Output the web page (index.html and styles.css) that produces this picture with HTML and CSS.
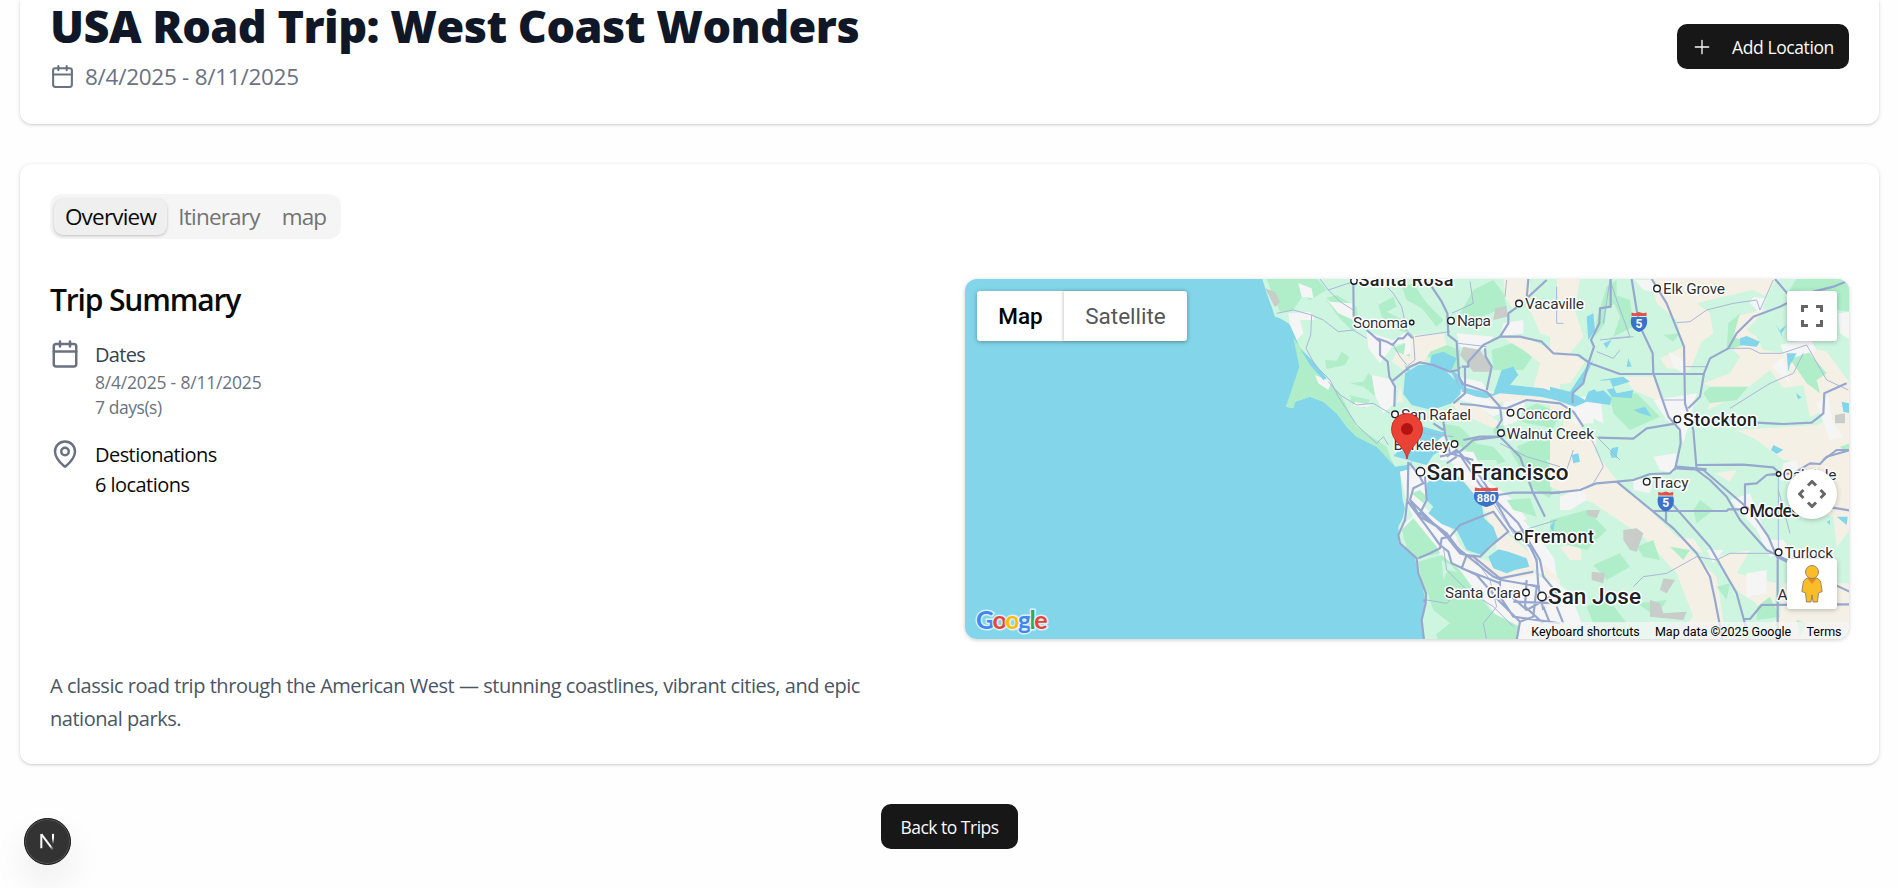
FILE: index.html
```html
<!DOCTYPE html>
<html lang="en">
<head>
<meta charset="utf-8">
<title>USA Road Trip: West Coast Wonders</title>
<link rel="stylesheet" href="styles.css">
</head>
<body>
<main class="page">
  <header class="card trip-header">
    <div>
      <h1 class="trip-title">USA Road Trip: West Coast Wonders</h1>
      <div class="trip-dates">
        <svg class="icon-md" viewBox="0 0 24 24"><path d="M8 2v4M16 2v4M3 10h18"/><rect x="3" y="4" width="18" height="18" rx="2"/></svg>
        <span>8/4/2025 - 8/11/2025</span>
      </div>
    </div>
    <button class="btn btn-add">
      <svg class="icon-sm" viewBox="0 0 24 24"><path d="M4 12h16M12 4v16"/></svg>
      <span>Add Location</span>
    </button>
  </header>

  <section class="card trip-body">
    <nav class="tabs">
      <button class="tab tab-overview active">Overview</button>
      <button class="tab tab-itinerary">Itinerary</button>
      <button class="tab tab-map">map</button>
    </nav>
    <div class="columns">
      <div>
        <h2 class="summary-title">Trip Summary</h2>
        <div class="fact">
          <svg class="icon-lg" viewBox="0 0 24 24"><path d="M8 2v4M16 2v4M3 10h18"/><rect x="3" y="4" width="18" height="18" rx="2"/></svg>
          <div class="fact-text">
            <p class="fact-label muted-label">Dates</p>
            <p class="fact-small">8/4/2025 - 8/11/2025</p>
            <p class="fact-small days">7 days(s)</p>
          </div>
        </div>
        <div class="fact">
          <svg class="icon-lg" viewBox="0 0 24 24"><path d="M20 10c0 5-5.500 10.200-7.400 11.800a1 1 0 0 1-1.200 0C9.500 20.200 4 15 4 10a8 8 0 0 1 16 0"/><circle cx="12" cy="10" r="3"/></svg>
          <div class="fact-text">
            <p class="fact-label destinations">Destionations</p>
            <p class="fact-label locations">6 locations</p>
          </div>
        </div>
      </div>
      <div class="map">
        <svg class="map-canvas" viewBox="965 279 885 360">
          <rect class="water" x="965" y="279" width="885" height="360"/>
          <g transform="translate(1260 270) scale(.333333)">
            <path class="land" d="M5 20 20 70 35 110 45 140 60 145 85 160 105 180 110 210 125 250 120 290 100 350 78 410 100 415 105 395 150 380 190 395 230 430 260 470 290 500 350 530 385 558 405 590 440 585 460 570 440 600 420 605 428 690 435 715 428 745 415 770 416 820 465 865 475 910 495 965 500 1000 485 1050 495 1115H1780V20Z"/>
            <!-- woodland, upper left -->
            <path class="wood" d="M20 25H170L200 60 150 90 130 75 100 120 60 125 40 80Z M100 205 135 250 190 320 240 370 290 470 380 530 400 585 350 530 290 500 260 470 230 430 190 395 150 380 105 395 100 415 78 410 118 290Z M245 245 268 262 255 285 200 297 195 270 230 272Z M325 310 375 350 345 378 310 350 270 340 310 335Z M195 85 230 75 290 110 300 170 280 185 235 140Z M355 105 400 80 410 110 380 125 430 150 445 190 400 175 365 140Z M425 50 460 40 500 100 550 150 530 170 485 115 440 90Z M640 60 700 30 730 70 740 110 690 130 640 150 600 130Z M480 245 560 225 600 240 600 310 570 295 520 270Z M695 240 770 215 830 240 790 300 700 300Z M270 375 330 390 315 415 275 400Z M400 235 435 220 455 270 420 255Z M545 460 600 470 650 520 640 555 570 510Z M750 440 830 400 900 430 880 475 800 460Z"/>
            <!-- towns and farmland, upper left -->
            <path class="town" d="M115 40 155 55 160 85 125 80Z M85 130 150 125 165 150 120 150 130 190 110 210 90 165Z M180 65 210 95 280 100 280 150 235 130Z M320 185 400 210 440 185 455 215 400 225 360 280 325 235Z M165 315 215 335 205 360 175 340Z M335 315 400 330 405 400 370 430 345 375Z M285 395 335 405 320 412 280 408Z M440 200 465 205 460 245 430 260Z M590 190 700 200 670 240 600 230Z M730 160 790 150 790 190 720 200Z M590 320 665 335 700 390 740 420 700 440 640 400 600 390Z M730 390 800 380 780 450 730 470Z M530 480 570 520 620 570H540Z"/>
            <path class="farm" d="M455 195 550 190 560 225 510 245 490 280 430 300 395 275 410 245 450 260Z M730 20H810V80L760 120 735 80Z M730 205 800 205 900 250V370L820 355 840 280 790 240Z M420 345 410 400 430 395Z M650 360 770 370 900 385V410L780 390 700 400Z M570 395 650 405 720 460 700 475 600 430Z M810 120 870 90 900 100V210L840 190Z"/>
            <path class="wood" d="M700 475 730 465 740 500 700 490Z M640 520 700 530 735 570H640Z M840 500 900 505V570H800L770 530Z"/>
            <path class="gray" d="M15 55 45 65 60 95 45 112Z M610 230 660 240 690 285 695 305 640 305 600 255Z M705 115 740 108 742 140 700 150Z"/>
            <path class="water" d="M435 310 475 285 520 283 560 305 600 345 603 370 575 400 545 410 515 420 455 405 430 372Z M515 255 550 245 590 265 575 300 540 300 510 280Z M570 300 590 310 620 350 600 360Z M605 350 700 372 725 300 760 290 775 315 750 345 800 350 850 355 900 372V392L840 380 780 375 720 370 680 385 650 380 605 365Z M120 235 165 280 200 325 190 330 150 285Z M435 285 450 300 440 305Z"/>
          </g>
          <g transform="translate(1260 450) scale(.333333)">
            <path class="town" d="M420 65 500 45 505 100 490 170 560 220 590 260 600 295 650 320 700 350 720 370 820 370 880 400 900 440V580H780L720 510 650 420 560 355 530 300 470 220 440 160Z M560 5 640 5 680 90 760 150 830 250 880 310 890 380 830 370 800 290 700 210 660 150 600 90Z M420 230 470 190 455 240 430 260Z M760 0H850L870 70 840 120 830 80Z"/>
            <path class="wood" d="M425 240 460 205 530 290 540 310 470 325 440 295Z M455 130 480 120 500 140 490 160Z M475 335 545 315 600 360 650 430 700 490 780 530 770 585H540L500 480Z M750 0H900V20L860 30 880 80 870 145 810 110Z M700 10 740 35 720 60Z M740 150 810 145 830 200 760 180Z"/>
            <path class="park" d="M500 420 520 480 570 520 520 560 500 570 490 530Z M545 330 570 345 550 390Z M690 50 750 30 800 100 760 120Z M790 210 850 200 870 260 900 250V350L850 280Z M570 340 590 365 560 360Z"/>
            <path class="farm" d="M600 85 640 110 660 150 700 170 740 250 800 300 830 350 800 375 700 335 710 290 670 170 620 120Z M590 270 620 310 690 335 710 360 820 360 830 375 720 390 620 330 580 290Z M850 340 900 390V440L860 390Z"/>
            <path class="water" d="M400 18 445 30 500 45 520 15 545 0 535 -30 560 -50 490 -70 440 -20Z M500 100 540 70 600 82 640 130 663 150 672 205 700 230 715 270 690 285 665 315 620 300 605 270 590 240 545 222 505 190 520 170 500 150Z M685 320 715 298 745 305 800 325 808 350 765 360 740 370 700 355Z M875 225 890 240 885 270 870 250Z"/>
          </g>
          <g transform="translate(1550 270) scale(.333333)">
            <path class="farm" d="M20 25H90L75 120 100 200 60 250 105 275 60 340 0 345V190H25Z M300 25H680L650 80 610 60 540 75 440 100 480 130 490 190 455 215 420 300 350 295 330 265 400 230 380 150 320 100Z M555 140 650 115 590 180 620 200 640 240 700 250 720 220 830 245 900 340V480L850 500 830 420 780 440 760 345 700 355 660 300 560 380 470 420 500 360 460 340 540 310 570 260 540 230Z M0 390 90 400 140 440 90 470 140 510 130 560 0 570V490H40V440H0Z M220 320 310 320 340 400 250 360Z M560 480 800 465 870 430 900 480V570H700L620 510Z"/>
            <path class="wood" d="M170 50 200 30 200 100 170 110 165 160 135 200 140 150Z M740 25H900V125L860 120 790 60 715 65Z M715 260 770 240 830 310 800 330 810 370 770 340Z M480 350 595 350 560 390 480 400 460 370Z M180 70 240 90 250 170 190 200 210 140Z M340 195 390 190 370 215Z M535 160 570 130 550 200 600 220 530 240Z M180 380 260 370 330 440 240 480 190 430Z M870 530 900 520V565Z"/>
            <path class="town" d="M255 30 310 30 325 70 280 60Z M355 245 400 270 400 310 370 290Z M310 390 440 370 420 450 400 520 380 470 350 450Z M90 390 150 370 160 460 120 440 80 450Z M60 380H130V460H70Z M610 80 650 85 630 130 600 100Z M690 225 780 205 800 240 710 270Z M865 130 900 125V210L870 190Z M800 400 835 380 850 460 880 500 840 510Z M665 290 700 260 720 340Z"/>
            <path class="water" d="M110 140 130 130 135 180 115 210Z M0 350 60 365 110 290 130 270 100 335 70 370 105 390 115 365 150 350 185 385 180 405 110 395 75 410 0 385Z M150 330 220 320 240 335 190 350 200 370 250 360 245 385 185 380Z M185 210 170 235 160 220Z M570 205 590 198 630 215 620 230 570 225Z M675 160 700 205 690 180 710 165 695 190Z M710 250 740 250 720 285 715 305Z M185 535 205 530 200 565 180 555Z M875 395 900 400V430L880 425Z M670 525 700 540 680 552 663 540Z M235 265 245 290 230 290Z M250 420 285 410 305 440 270 430Z M738 370 755 382 745 388Z"/>
            <path class="park" d="M115 335 180 330 190 355 140 365Z"/>
            <path class="gray" d="M855 435 885 430 885 460 855 460Z"/>
          </g>
          <g transform="translate(1550 450) scale(.333333)">
            <path class="farm" d="M0 0H130L200 90 300 180 430 310 500 380 530 580H350L430 500 380 370 280 260 130 160 0 110Z M495 70 560 60 540 95Z M700 0H900V240L860 290 850 200 760 170 740 80Z M490 320 600 300 560 370 680 400 670 500 620 500 620 460 570 430Z M700 400H900V585H720L640 540 690 500Z M30 290 90 280 95 330 60 330Z M370 265 430 265 460 310 410 290Z"/>
            <path class="wood" d="M0 210 110 180 170 240 110 300 0 270Z M130 345 210 310 240 350 170 390Z M260 290 310 270 330 330 280 320Z M360 290 420 300 400 330Z M620 470 660 440 690 500 620 510Z M110 470 170 440 230 520H130Z M450 150 490 180 440 220 430 180Z M260 460 350 450 320 500Z M500 410 540 400 530 450Z M740 510 770 520 750 560Z"/>
            <path class="town" d="M310 20 380 10 370 70 330 60Z M30 140 100 110 110 150 60 180 30 180Z M250 90 310 85 300 130 250 120Z M540 150 600 130 650 260 700 310 660 320 620 240Z M660 270 700 270 740 320 680 330Z M590 370 650 360 650 430 590 440Z M470 300 520 300 490 340Z M0 380 60 430 100 530 0 540Z M700 40 740 30 750 100 690 90Z"/>
            <path class="gray" d="M110 180 150 180 140 205 110 195Z M220 240 260 235 280 250 260 305 240 300 220 270Z M125 365 165 370 160 400 125 390Z M340 385 375 390 350 430 330 420Z M300 450 330 460 340 490 410 485 400 510 300 500Z"/>
            <path class="water" d="M65 15 85 10 90 35 70 40Z M180 0 200 0 200 20 185 25Z M830 215 840 210 840 225Z M860 200 893 200 890 225Z M0 230 15 210 10 250Z"/>
          </g>
          <g class="minor" transform="translate(1260 270) scale(.333333)">
            <path d="M50 130 100 120 155 135 190 150 235 185 280 180 320 205M155 135 152 195 138 235 165 285 210 330 235 380 290 465 350 520 370 500 385 525M180 27 205 60 280 35M205 60 240 95 280 120M365 35 400 70 425 110 440 180 460 200 465 270 440 290M400 225 420 260 440 285M465 200 570 185M595 220 680 230M740 30 735 80M630 35 640 100 575 130M580 300 595 345M205 335 240 375 290 405 340 400 390 430M890 50V160H910M1050 30 1030 160M1055 45 1070 90 1110 200 1050 205M1120 200 1020 210M1010 245 1060 265 1080 240M1250 158 1290 155 1340 120 1420 100 1490 90 1500 120 1540 30M1405 235 1470 235 1500 250 1565 250 1640 225 1700 330 1765 360M1410 415 1530 340 1600 310 1630 250M1270 290H1340M1210 390H1275M980 480 1010 540 1030 590 1000 640 960 660M1010 500 1080 570"/>
            <path d="M720 520 800 560 900 590M490 490 580 500M700 700 760 790 890 750M550 830 560 900 620 960 700 1010 760 1070M640 860 690 930 710 1010 670 1060 680 1110M500 990 560 1000 600 960M810 820 830 880M1120 950 1150 920 1220 910 1310 860 1370 870 1410 850 1550 850M1555 600V860M1555 660 1590 790M940 540 920 600 890 610"/>
          </g>
          <g class="major" transform="translate(1260 270) scale(.333333)">
            <path d="M280 27 281 140M320 180 360 215 360 255 383 275 388 320 405 350 403 410M350 205 380 215 398 225 415 205 430 205 443 190 458 205M395 335 450 290 480 277 520 285 570 305 595 300 600 290M515 50 545 95 562 130 565 195 590 215 597 320 610 345M605 290 625 290 625 275 670 225 720 200 745 160 745 130 770 112M615 290 615 370 580 400M605 340 680 365 720 410 725 450 710 475M675 235 677 260 695 290 680 360M720 200 780 200 845 215 880 250 955 255 990 280 1080 312 1330 312M600 402 645 405 690 412 740 415 800 390 900 400 940 425 970 470M805 27 800 85 860 30M1052 27 1052 110 1020 115 1018 160 993 210 1002 230 985 280 970 340 938 370V400"/>
            <path d="M1115 27 1130 120 1145 180 1178 250 1180 310 1225 440 1260 480 1262 520 1245 600M1175 27 1220 100 1272 230 1275 400 1300 480 1310 600 1350 630 1400 680 1440 750 1520 840 1580 870 1650 900M1285 415 1320 380 1332 310 1350 265 1405 235 1430 190 1480 140 1560 110 1640 70 1720 50 1770 30M1015 503 1120 506 1160 475 1250 460M1490 458 1570 462 1655 458 1690 430 1693 370 1760 340M1545 27 1590 80M1780 540 1730 540 1690 570"/>
          </g>
          <g class="major" transform="translate(1260 450) scale(.333333)">
            <path d="M445 35 443 140 435 210 415 255 420 280 470 325 475 370 498 430 497 460 485 510 492 570M450 40 480 80 490 100 460 115 450 150 480 200 540 235 600 310 640 320 720 385M440 150 500 230 540 285 565 305 575 340 650 375 720 455 780 515 770 570M450 150 525 225 600 300 700 380 725 390 840 410M495 80 500 150 480 190 560 250 605 310M475 325 510 310 540 295 545 265 570 260 600 225 700 185 745 245 690 290 660 320 620 315 605 355 720 400M490 450 500 455M560 20 590 0 640 50 680 110 710 160 750 230 810 290 830 330 835 410 850 480M600 15 660 105 715 160 775 220 840 330 850 380 900 440M640 -30 600 5 540 20M640 -30 720 -40 780 20 820 130 855 200M715 135 760 128 900 128M720 380 720 440 700 440M720 385 820 365M755 440 800 480 890 430M790 400 830 410 820 500 780 515M720 440 760 500 900 520M760 455 900 460M800 390 795 470 850 520M850 470 870 520M550 -90 555 -50 570 10 640 30M520 -80 550 -60M590 20 560 40M610 -30 660 -40 720 -40"/>
            <path d="M870 130 960 120 1010 100 1070 95 1120 90 1170 72 1230 70 1250 50 1340 58M1070 95 1180 185 1240 235 1310 310 1350 380 1365 450 1390 580M1235 160 1350 290 1430 430 1460 540M1218 165V220M1180 183H1400L1405 178H1455M1250 55 1330 60 1470 180 1525 260 1550 320 1650 370 1780 430M1310 45 1450 44 1540 52 1560 70 1520 75 1490 100 1455 103V170M1540 74 1600 70 1650 40 1680 42 1700 20 1770 0M1700 170 1780 183M1553 325V580M1450 507 1470 507 1505 465 1780 463M890 470 910 520"/>
          </g>

          <g class="dots">
            <circle cx="1354" cy="281" r="3.200"/><circle cx="1411.700" cy="322.500" r="2.200"/><circle cx="1451" cy="320.700" r="3.300"/><circle cx="1519" cy="303.500" r="3.300"/><circle cx="1395" cy="414.300" r="3.300"/><circle cx="1454.500" cy="444" r="3.300"/><circle cx="1510.500" cy="412.700" r="3.300"/><circle cx="1501" cy="433" r="3.300"/><circle cx="1420.500" cy="471.700" r="4.200"/><circle cx="1518.500" cy="536.500" r="3.300"/><circle cx="1526" cy="592.500" r="3.300"/><circle cx="1542" cy="596.500" r="4.200"/><circle cx="1657" cy="288.500" r="3.300"/><circle cx="1677.300" cy="419.300" r="3.300"/><circle cx="1646.700" cy="481.700" r="3.300"/><circle cx="1778.600" cy="474" r="2.200"/><circle cx="1744.300" cy="510.500" r="3.300"/><circle cx="1778.600" cy="552.300" r="3.300"/>
          </g>
          <g class="places">
            <text x="1353" y="328" textLength="55">Sonoma</text>
            <text x="1457" y="326" textLength="34">Napa</text>
            <text x="1525" y="309" textLength="59">Vacaville</text>
            <text x="1401" y="420" textLength="70">San Rafael</text>
            <text x="1393.500" y="449.700" textLength="56">Berkeley</text>
            <text x="1516" y="418.500" textLength="55.500">Concord</text>
            <text x="1506.500" y="438.500" textLength="87.500">Walnut Creek</text>
            <text x="1445" y="598" textLength="76">Santa Clara</text>
            <text x="1663" y="294" textLength="62">Elk Grove</text>
            <text x="1652" y="487.500" textLength="36.500">Tracy</text>
            <text x="1782.500" y="479.500" textLength="54">Oakdale</text>
            <text x="1784.500" y="558" textLength="48.500">Turlock</text>
            <text x="1777.500" y="600" textLength="52">Atwater</text>
          </g>
          <g class="cities">
            <text x="1358.500" y="285.500" textLength="95">Santa Rosa</text>
            <text x="1524" y="543" textLength="70">Fremont</text>
            <text x="1683" y="425.500" textLength="74">Stockton</text>
            <text x="1749.500" y="516.500" textLength="65">Modesto</text>
            <text class="metro" x="1426.500" y="479.500" textLength="142">San Francisco</text>
            <text class="metro" x="1548" y="604" textLength="93">San Jose</text>
          </g>
          <g class="shield" transform="translate(1639 322)"><path class="shield-blue" d="M-7.500-5H7.500C10 4 5 8.500 0 10-5 8.500-10 4-7.500-5Z"/><path class="shield-red" d="M-7.500-9.500-4-8.700 0-10 4-8.700 7.500-9.500V-6H-7.500Z"/><text y="5.500">5</text></g>
          <g class="shield" transform="translate(1665.700 501.500)"><path class="shield-blue" d="M-7.500-5H7.500C10 4 5 8.500 0 10-5 8.500-10 4-7.500-5Z"/><path class="shield-red" d="M-7.500-9.500-4-8.700 0-10 4-8.700 7.500-9.500V-6H-7.500Z"/><text y="5">5</text></g>
          <g class="shield" transform="translate(1486.300 497)"><path class="shield-blue" d="M-11.500-5H11.500C15 4 7 8.500 0 10-7 8.500-15 4-11.500-5Z"/><path class="shield-red" d="M-11.500-9.500-6-8.700 0-9.500 6-8.700 11.500-9.500V-6H-11.500Z"/><text class="wide" y="5">880</text></g>
          <path class="pin" d="M1407 459C1405 446 1391.500 442 1391.500 429A15.500 15.500 0 0 1 1422.500 429C1422.500 442 1409 446 1407 459Z"/>
          <circle class="pin-dot" cx="1407" cy="429" r="6"/>
          <text class="google" x="976" y="629" textLength="71.500"><tspan class="g-blue">G</tspan><tspan class="g-red">o</tspan><tspan class="g-yellow">o</tspan><tspan class="g-blue">g</tspan><tspan class="g-green">l</tspan><tspan class="g-red">e</tspan></text>
        </svg>
        <div class="map-types"><span class="map-type selected">Map</span><span class="map-type">Satellite</span></div>
        <div class="map-control fullscreen"><svg viewBox="0 0 22 22"><path d="M1.500 7V1.500H7M15 1.500H20.500V7M20.500 15V20.500H15M7 20.500H1.500V15"/></svg></div>
        <div class="map-control camera"><svg viewBox="0 0 28 28"><path d="M10 5.500 14 1.500 18 5.500M22.500 10 26.500 14 22.500 18M18 22.500 14 26.500 10 22.500M5.500 18 1.500 14 5.500 10"/></svg></div>
        <div class="map-control pegman"><svg viewBox="0 0 24 40"><path class="body" d="M7 14 3.500 17 1.800 27.500 5.500 29 6.500 38H11L12 31 13 38H17.500L18.500 29 22.200 27.500 20.500 17 17 14Z"/><path class="scarf" d="M7 14H17L12 20Z"/><circle class="head" cx="12" cy="8" r="6.500"/></svg></div>
        <div class="attribution"><span class="shortcuts">Keyboard shortcuts</span><span class="data">Map data ©2025 Google</span><span class="terms">Terms</span></div>
      </div>
    </div>
    <p class="description">A classic road trip through the American West — stunning coastlines, vibrant cities, and epic<br>national parks.</p>
  </section>

  <button class="btn btn-back">Back to Trips</button>
  <div class="dev-badge"><svg viewBox="0 0 40 40"><defs><linearGradient id="nfade" x1="0" y1="0" x2="0" y2="1"><stop offset=".4" stop-color="#fff"/><stop offset="1" stop-color="#fff" stop-opacity="0"/></linearGradient><linearGradient id="nslant" gradientUnits="userSpaceOnUse" x1="14" y1="13" x2="25" y2="27.500"><stop offset=".75" stop-color="#fff"/><stop offset="1" stop-color="#fff" stop-opacity="0"/></linearGradient></defs><path class="n-main" stroke="#fff" d="M14.500 26V13.500"/><path class="n-main" stroke="url(#nslant)" d="M14.500 13.500 25 27.500"/><rect x="24" y="13.200" width="1.800" height="9" fill="url(#nfade)"/></svg></div>
</main>
</body>
</html>
```
FILE: styles.css
```css
* { box-sizing: border-box; }
body {
  margin: 0;
  height: 888px;
  overflow: hidden;
  background: #fefefe;
  color: #0a0a0a;
  font-family: "Open Sans", "Noto Sans", sans-serif;
}
h1, h2, p { margin: 0; }
button { border: 0; font-family: inherit; }
.page {
  display: flex;
  flex-direction: column;
  height: 888px;
  padding: 0 19px 0 20px;
}
.card {
  background: #fff;
  border-radius: 12px;
  padding: 0 30px;
  box-shadow: 0 1px 4px rgba(0, 0, 0, .12), 0 1px 2px rgba(0, 0, 0, .1);
}
.trip-header {
  display: flex;
  justify-content: space-between;
  align-items: flex-start;
  height: 124px;
  border-radius: 0 0 12px 12px;
}
.trip-title {
  font-size: 45px;
  line-height: 52px;
  font-weight: 800;
  letter-spacing: -0.53px;
  color: #101828;
  white-space: nowrap;
}
.trip-dates {
  display: flex;
  align-items: center;
  gap: 10px;
  height: 35px;
  margin-top: 7px;
  font-size: 22.5px;
  letter-spacing: -.27px;
  color: #6a7282;
}
svg { display: block; }
.icon-sm, .icon-md, .icon-lg {
  flex: none;
  fill: none;
  stroke: currentColor;
  stroke-width: 2;
  stroke-linecap: round;
  stroke-linejoin: round;
}
.icon-sm { width: 20px; height: 20px; stroke-width: 1.6; }
.icon-md { width: 25px; height: 25px; }
.icon-lg { width: 30px; height: 30px; color: #6a7282; }
.btn {
  height: 45px;
  border-radius: 10px;
  background: #171717;
  color: #fafafa;
  font-size: 17.5px;
  letter-spacing: -.4px;
  white-space: nowrap;
  padding: 0;
}
.btn-add {
  display: flex;
  align-items: center;
  gap: 20px;
  width: 172px;
  margin-top: 24px;
  padding-left: 15px;
}
.btn-back { align-self: center; width: 137px; margin-top: 40px; flex: none; letter-spacing: -.5px; }
.trip-body { margin-top: 40px; height: 600px; padding-top: 30px; flex: none; }
.tabs {
  display: flex;
  align-items: center;
  width: 291px;
  height: 45px;
  padding: 0 4px;
  border-radius: 12px;
  background: #f5f5f5;
}
.tab {
  height: 36px;
  padding: 0;
  border-radius: 9px;
  background: none;
  color: #737373;
  font-size: 22.5px;
  line-height: 34px;
  letter-spacing: -.8px;
}
.tab-overview { width: 113px; }
.tab-itinerary { width: 104px; }
.tab-map { width: 66px; }
.tab.active {
  background: #efefef;
  color: #0a0a0a;
  box-shadow: 0 1px 3px rgba(0, 0, 0, .22);
}
.columns {
  display: grid;
  grid-template-columns: 884px 884px;
  justify-content: space-between;
  margin-top: 40px;
  height: 360px;
}
.summary-title {
  font-size: 30px;
  line-height: 42px;
  font-weight: 600;
  letter-spacing: -1.15px;
  margin-bottom: 18px;
}
.fact { display: flex; gap: 15px; margin-bottom: 19px; }
.fact-text { padding-top: 1px; }
.fact-label { font-size: 20px; line-height: 30px; letter-spacing: -.55px; }
.muted-label { color: #364153; letter-spacing: -.7px; }
.fact-small { font-size: 17.5px; line-height: 25px; letter-spacing: -.2px; color: #6a7282; }
.days { letter-spacing: -.45px; }
.description {
  margin-top: 31px;
  font-size: 20px;
  line-height: 32.5px;
  letter-spacing: -.465px;
  color: #4a5565;
  white-space: nowrap;
}

.map {
  position: relative;
  overflow: hidden;
  border-radius: 12px;
  font-family: Roboto, Arial, sans-serif;
  box-shadow: 0 1px 4px rgba(0, 0, 0, .2);
}
.map-canvas { width: 885px; height: 360px; }
.water { fill: #83d6ea; }
.land { fill: #cdf5e0; }
.wood { fill: #afeec9; }
.park { fill: #cdf5e0; }
.town { fill: #f5f5f5; }
.farm { fill: #f5f0e5; }
.gray { fill: #c8cdc9; }
.minor, .major { fill: none; stroke: #a9b8d8; stroke-width: 3; stroke-linejoin: round; }
.major { stroke: #97a7ce; stroke-width: 6.5; }
.dots { fill: #fff; stroke: #202124; stroke-width: 1.4; }
.places, .cities {
  font-size: 15.5px;
  fill: #303134;
  stroke: #fff;
  stroke-width: 3px;
  stroke-linejoin: round;
  paint-order: stroke;
}
.cities { font-size: 18px; font-weight: 500; fill: #202124; }
.metro { font-size: 22.5px; }
.shield text { fill: #fff; font-size: 12px; font-weight: 700; text-anchor: middle; }
.shield .wide { font-size: 11px; }
.shield-blue { fill: #3b72c8; }
.shield-red { fill: #e0534c; }
.pin { fill: #ea4335; stroke: #c5221f; stroke-width: .8; }
.pin-dot { fill: #b31412; }
.google {
  font-family: Lato, sans-serif;
  font-size: 25px;
  font-weight: 700;
  stroke: rgba(255, 255, 255, .7);
  stroke-width: 3px;
  paint-order: stroke;
}
.g-blue { fill: #4285f4; }
.g-red { fill: #ea4335; }
.g-yellow { fill: #fbbc04; }
.g-green { fill: #34a853; }
.map-types {
  position: absolute;
  left: 12px;
  top: 12px;
  display: flex;
  width: 210px;
  height: 50px;
  border-radius: 3px;
  background: #fff;
  box-shadow: 0 1px 5px rgba(0, 0, 0, .3);
}
.map-type {
  width: 123px;
  text-align: center;
  font-size: 22.5px;
  line-height: 50px;
  color: #565656;
  box-shadow: -1px 0 3px rgba(0, 0, 0, .2);
}
.map-type.selected { width: 87px; color: #000; font-weight: 500; box-shadow: none; }
.map-control {
  position: absolute;
  right: 12px;
  width: 50px;
  height: 50px;
  display: flex;
  align-items: center;
  justify-content: center;
  border-radius: 3px;
  background: #fff;
  box-shadow: 0 1px 5px rgba(0, 0, 0, .25);
}
.fullscreen { top: 12px; }
.camera { top: 190px; border-radius: 50%; }
.pegman { top: 280px; }
.fullscreen svg, .camera svg { fill: none; stroke: #666; stroke-width: 3; }
.fullscreen svg { width: 22px; }
.camera svg { width: 28px; }
.pegman svg { height: 40px; }
.body, .head { fill: #fbbc2a; stroke: #7a7563; stroke-width: .8; }
.scarf { fill: #e58a22; }
.attribution {
  position: absolute;
  right: 0;
  bottom: 0;
  display: flex;
  height: 17.500px;
  font-size: 12.5px;
  line-height: 19px;
  color: #000;
  background: rgba(245, 245, 245, .75);
}
.attribution span { text-align: center; white-space: nowrap; }
.shortcuts { width: 123px; }
.data { width: 152px; }
.terms { width: 50px; }

.dev-badge {
  position: fixed;
  left: 24px;
  top: 818px;
  width: 47px;
  height: 47px;
  border-radius: 50%;
  border: 1px solid #111;
  background: #333;
  box-shadow: inset 0 0 0 1px #555, 0 18px 36px rgba(0, 0, 0, .08);
}
.dev-badge svg { width: 45px; height: 45px; }
.n-main { fill: none; stroke-width: 1.8; }
```
